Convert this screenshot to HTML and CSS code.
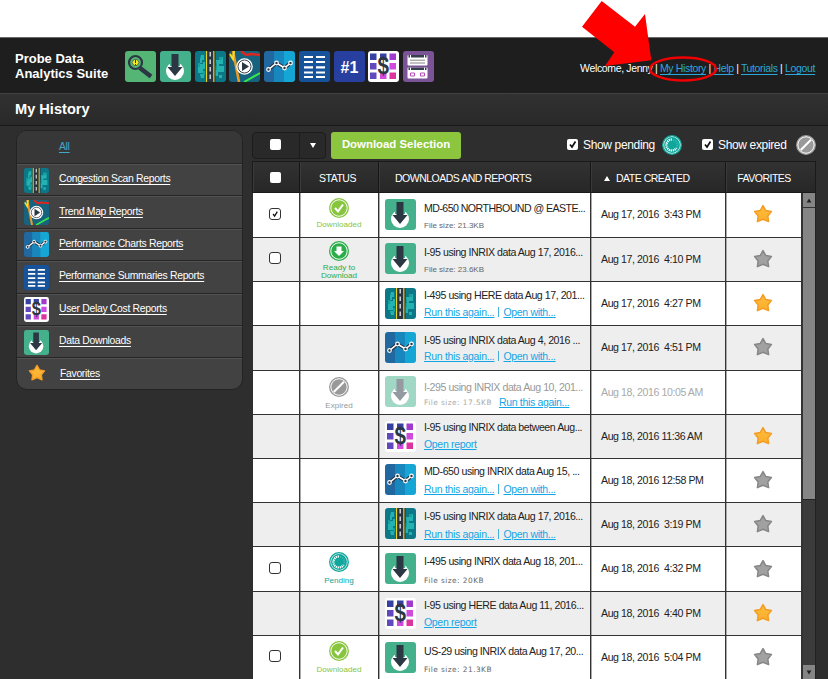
FILE: index.html
```html
<!DOCTYPE html>
<html lang="en">
<head>
<meta charset="utf-8">
<title>My History</title>
<link rel="stylesheet" href="styles.css">
</head>
<body>
<svg class="defs" aria-hidden="true">
  <defs>
    <linearGradient id="gold" x2="0" y2="1"><stop stop-color="#fdbd3d"/><stop offset="1" stop-color="#fbae2b"/></linearGradient>
    <clipPath id="tile"><rect width="31" height="31" rx="3"/></clipPath>
  </defs>
</svg>
<svg class="symbols" aria-hidden="true">
  <symbol id="search" viewBox="0 0 31 31">
    <rect width="31" height="31" rx="3" fill="#54b574"/>
    <path d="M15 17l11 8.500" stroke="#2c3744" stroke-width="4.500"/>
    <circle cx="10.500" cy="11.500" r="6.500" fill="#54b574" stroke="#2c3744" stroke-width="2.200"/>
    <path d="M7 11.500l2-3h3l2 3-2 3h-3z" fill="#f3ed24" stroke="#2c3744" stroke-width=".6"/>
    <path d="M10.500 9v3M10.500 13v1" stroke="#333" stroke-width="1"/>
  </symbol>
  <symbol id="download" viewBox="0 0 31 31">
    <rect width="31" height="31" rx="3" fill="#45b08c"/>
    <circle cx="15" cy="20" r="9" fill="#fff"/>
    <path d="M10 3h10v12h-10z" fill="#45b08c"/>
    <path d="M11.500 3h7v13h4L15 25 7.500 16h4z" fill="#2c3744"/>
  </symbol>
  <symbol id="scan" viewBox="0 0 31 31">
    <rect width="31" height="31" rx="3" fill="#0c7787"/>
    <path d="M6 4h3v5h-2v3h-2v-4zM4 13h4v-2h2v7H8v4H3v-6zM5 23h4v4H6zM21 9h3V6h4v7h-4v2h5v6h-6v4h-3v-7h2zM24 24h3v3h-3z" fill="#22b3b0"/>
    <path d="M3 12h2v4H3zM8 20h2v4H8zM19 15h3v4h-3zM24 6h3v3h-3z" fill="#159f9f"/>
    <path d="M10.500 0h10v31h-10z" fill="#283442"/>
    <path d="M11.500 0v31M18.800 0v31" stroke="#e9d51b" stroke-width="1.200"/>
    <path d="M15.200 1v30" stroke="#ddd" stroke-width="1.400" stroke-dasharray="4.500 3"/>
  </symbol>
  <symbol id="trend" viewBox="0 0 31 31"><g clip-path="url(#tile)">
    <rect width="31" height="31" fill="#17637f"/>
    <path d="M4 0l6 31" stroke="#ed9b24" stroke-width="2.500" fill="none"/>
    <path d="M1 3l3 5 1-8" stroke="#f3dc24" stroke-width="2" fill="none"/>
    <path d="M12 0l5 4 5-1 9 1M18 4l3-1" stroke="#db271d" stroke-width="2.500" fill="none"/>
    <path d="M15 31l16-9" stroke="#35e74b" stroke-width="2"/>
    <circle cx="15.500" cy="15.500" r="8.300" fill="#fff"/>
    <circle cx="15.500" cy="15.500" r="6.500" fill="#fff" stroke="#39444a" stroke-width="1"/>
    <path d="M13 11l7 4.500-7 4.500z" fill="#2c3744"/></g>
  </symbol>
  <symbol id="chart" viewBox="0 0 31 31"><g clip-path="url(#tile)">
    <path d="M0 0h10v31H0z" fill="#2268a0"/><path d="M10 0h10v31H10z" fill="#1887bd"/><path d="M20 0h11v31H20z" fill="#16a6d6"/>
    <path d="M4.500 18.500l8-6.500 8 5 6-5" stroke="#26384a" stroke-width="3.800" fill="none"/>
    <path d="M4.500 18.500l8-6.500 8 5 6-5" stroke="#fff" stroke-width="1.600" fill="none"/>
    <g fill="#26384a" stroke="#fff" stroke-width="1.200"><circle cx="4.500" cy="18.500" r="1.800"/><circle cx="12.500" cy="12" r="1.800"/><circle cx="20.500" cy="17" r="1.800"/><circle cx="26.500" cy="12" r="1.800"/></g></g>
  </symbol>
  <symbol id="summary" viewBox="0 0 31 31">
    <rect width="31" height="31" rx="3" fill="#16539b"/>
    <path d="M5 6h9M5 11h9M5 16.300h9M5 21.500h9M5 26h9M17 6h9M17 11h9M17 16.300h9M17 21.500h9M17 26h9" stroke="#fff" stroke-width="2.200"/>
  </symbol>
  <symbol id="rank" viewBox="0 0 31 31">
    <rect width="31" height="31" rx="3" fill="#27409f"/>
    <text x="15.500" y="22" text-anchor="middle" class="rank-text">#1</text>
  </symbol>
  <symbol id="cost" viewBox="0 0 31 31">
    <rect width="31" height="31" rx="3" fill="#fff"/>
    <path d="M2 2.500h6.500V9H2zM12 2.500h6.500V9H12z" fill="#3542a2"/>
    <path d="M2 12h6.500v6.500H2zM2 21.500h6.500V28H2z" fill="#6248bd"/>
    <path d="M21.500 2.500H28V9h-6.500z" fill="#a03bce"/><path d="M21.500 12H28v6.500h-6.500zM12 21.500h6.500V28H12z" fill="#d04add"/>
    <path d="M21.500 21.500H28V28h-6.500z" fill="#dc349f"/>
    <text transform="translate(15.200 22.500) scale(.9 1)" text-anchor="middle" class="dollar-text">$</text>
  </symbol>
  <symbol id="form" viewBox="0 0 31 31">
    <rect width="31" height="31" rx="3" fill="#7b5397"/>
    <rect x="4.500" y="4" width="20" height="10.500" rx="1" fill="#fff"/><rect x="4.500" y="16.500" width="20" height="11" rx="1" fill="#fff"/>
    <path d="M5.500 5.200h1.500M8 5.200h13M22 5.200h1.500M5.500 17.700h1.500M8 17.700h13M22 17.700h1.500" stroke="#36404c" stroke-width="2.400"/>
    <path d="M7 9.200h15M7 12h15" stroke="#777" stroke-width=".9"/>
    <path d="M7.500 22h4v3h-4zM17.500 22h4v3h-4z" fill="none" stroke="#b94bbc"/>
  </symbol>
  <symbol id="star" viewBox="0 0 20 20"><path d="M10 1.600l2.800 5 5.600 1-3.600 4.300.8 5.700-5.600-2.400-5.600 2.400.8-5.700-3.600-4.300 5.600-1z" stroke-width="1.500" stroke-linejoin="round"/></symbol>
  <symbol id="done" viewBox="0 0 20 20"><circle cx="10" cy="10" r="9.300" fill="#fff" stroke="#88c53e" stroke-width="1.300"/><circle cx="10" cy="10" r="7.700" fill="#88c53e"/><path d="M6 10l3 3.300 5-6.800" fill="none" stroke="#fff" stroke-width="2"/></symbol>
  <symbol id="ready" viewBox="0 0 20 20"><circle cx="10" cy="10" r="9.300" fill="#fff" stroke="#2bad4a" stroke-width="1.300"/><circle cx="10" cy="10" r="7.700" fill="#2bad4a"/><path d="M7.500 5.500h5v4.500h2.500l-5 5-5-5h2.500z" fill="#fff"/></symbol>
  <symbol id="pending" viewBox="0 0 20 20"><circle cx="10" cy="10" r="9.300" fill="#d9f1ee" stroke="#0fa69b" stroke-width="1.300"/><circle cx="10" cy="10" r="7.900" fill="#0fa69b"/><path d="M10 4.500A5.500 5.500 0 1 0 14.500 13" fill="none" stroke="#fff" stroke-width="2.200" stroke-dasharray="1.300 .7"/><path d="M14.500 13A5.500 5.500 0 0 0 10 4.500" fill="none" stroke="#4fc0b6" stroke-width="1.500" stroke-dasharray="1 1.300"/></symbol>
  <symbol id="expired" viewBox="0 0 20 20"><circle cx="10" cy="10" r="9.300" fill="#fff" stroke="#999" stroke-width="1.300"/><circle cx="10" cy="10" r="7.700" fill="#999"/><path d="M4.800 15L15 4.800" stroke="#fff" stroke-width="2"/></symbol>
</svg>

<header class="topbar">
  <div class="brand"><div>Probe Data</div><div>Analytics Suite</div></div>
  <div class="tools">
    <svg><use href="#search"/></svg><svg><use href="#download"/></svg><svg><use href="#scan"/></svg><svg><use href="#trend"/></svg><svg><use href="#chart"/></svg><svg><use href="#summary"/></svg><svg><use href="#rank"/></svg><svg><use href="#cost"/></svg><svg><use href="#form"/></svg>
  </div>
  <nav class="user">Welcome, Jenny | <a>My History</a> | <a>Help</a> | <a>Tutorials</a> | <a>Logout</a></nav>
</header>
<h1 class="page-title">My History</h1>

<div class="layout">
  <aside class="side">
    <div class="item all"><a>All</a></div>
    <div class="item"><svg><use href="#scan"/></svg><a>Congestion Scan Reports</a></div>
    <div class="item"><svg><use href="#trend"/></svg><a>Trend Map Reports</a></div>
    <div class="item"><svg><use href="#chart"/></svg><a>Performance Charts Reports</a></div>
    <div class="item"><svg><use href="#summary"/></svg><a>Performance Summaries Reports</a></div>
    <div class="item"><svg><use href="#cost"/></svg><a>User Delay Cost Reports</a></div>
    <div class="item"><svg><use href="#download"/></svg><a>Data Downloads</a></div>
    <div class="item"><svg class="gold small"><use href="#star"/></svg><a>Favorites</a></div>
  </aside>

  <main class="main">
    <div class="toolbar">
      <div class="select"><span class="half"><i class="blank"></i></span><span class="caret"><i class="down"></i></span></div>
      <div class="button">Download Selection</div>
      <div class="filter pend"><svg class="tick" viewBox="0 0 11 11"><path d="M3 5.500l2 2.500 3.500-5.500"/></svg><span>Show pending</span><svg class="state"><use href="#pending"/></svg></div>
      <div class="filter exp"><svg class="tick" viewBox="0 0 11 11"><path d="M3 5.500l2 2.500 3.500-5.500"/></svg><span>Show expired</span><svg class="state"><use href="#expired"/></svg></div>
    </div>
    <div class="head">
      <div class="center first"><i class="blank"></i></div><div class="center"><span>STATUS</span></div><div class="reports-head">DOWNLOADS AND REPORTS</div><div class="date-head"><i class="up"></i>DATE CREATED</div><div class="center fav-head">FAVORITES</div>
    </div>
    <div class="body">
      <div class="rows">
        <div class="row r1"><div class="check"><svg class="box" viewBox="0 0 13 13"><path d="M4 6.500l2 2.700 3.500-5.700"/></svg></div><div class="status done"><svg><use href="#done"/></svg><span>Downloaded</span></div><div class="report"><svg><use href="#download"/></svg><div><p>MD-650 NORTHBOUND @ EASTE...</p><p class="sub"><small>File size: 21.3KB</small></p></div></div><div class="date">Aug 17, 2016&nbsp; 3:43 PM</div><div class="fav"><svg class="gold"><use href="#star"/></svg></div></div>
        <div class="row r2"><div class="check"><svg class="box" viewBox="0 0 13 13"></svg></div><div class="status ready"><svg><use href="#ready"/></svg><span>Ready to<br>Download</span></div><div class="report"><svg><use href="#download"/></svg><div><p>I-95 using INRIX data Aug 17, 2016...</p><p class="sub"><small>File size: 23.6KB</small></p></div></div><div class="date">Aug 17, 2016&nbsp; 4:10 PM</div><div class="fav"><svg class="gray"><use href="#star"/></svg></div></div>
        <div class="row r3"><div class="check"></div><div class="status"></div><div class="report"><svg><use href="#scan"/></svg><div><p>I-495 using HERE data Aug 17, 201...</p><p class="sub"><a>Run this again...</a><b></b><a>Open with...</a></p></div></div><div class="date">Aug 17, 2016&nbsp; 4:27 PM</div><div class="fav"><svg class="gold"><use href="#star"/></svg></div></div>
        <div class="row r4"><div class="check"></div><div class="status"></div><div class="report"><svg><use href="#chart"/></svg><div><p>I-95 using INRIX data Aug 4, 2016 ...</p><p class="sub"><a>Run this again...</a><b></b><a>Open with...</a></p></div></div><div class="date">Aug 17, 2016&nbsp; 4:51 PM</div><div class="fav"><svg class="gray"><use href="#star"/></svg></div></div>
        <div class="row r5 old"><div class="check"></div><div class="status"><svg><use href="#expired"/></svg><span>Expired</span></div><div class="report"><svg><use href="#download"/></svg><div><p>I-295 using INRIX data Aug 10, 201...</p><p class="sub"><small class="wide">File size: 17.5KB</small><a>Run this again...</a></p></div></div><div class="date">Aug 18, 2016 10:05 AM</div><div class="fav"></div></div>
        <div class="row r6"><div class="check"></div><div class="status"></div><div class="report"><svg><use href="#cost"/></svg><div><p>I-95 using INRIX data between Aug...</p><p class="sub"><a>Open report</a></p></div></div><div class="date">Aug 18, 2016 11:36 AM</div><div class="fav"><svg class="gold"><use href="#star"/></svg></div></div>
        <div class="row r7"><div class="check"></div><div class="status"></div><div class="report"><svg><use href="#chart"/></svg><div><p>MD-650 using INRIX data Aug 15, ...</p><p class="sub"><a>Run this again...</a><b></b><a>Open with...</a></p></div></div><div class="date">Aug 18, 2016 12:58 PM</div><div class="fav"><svg class="gray"><use href="#star"/></svg></div></div>
        <div class="row r8"><div class="check"></div><div class="status"></div><div class="report"><svg><use href="#scan"/></svg><div><p>I-95 using INRIX data Aug 17, 2016...</p><p class="sub"><a>Run this again...</a><b></b><a>Open with...</a></p></div></div><div class="date">Aug 18, 2016&nbsp; 3:19 PM</div><div class="fav"><svg class="gray"><use href="#star"/></svg></div></div>
        <div class="row r9"><div class="check"><svg class="box" viewBox="0 0 13 13"></svg></div><div class="status pending"><svg><use href="#pending"/></svg><span>Pending</span></div><div class="report"><svg><use href="#download"/></svg><div><p>I-495 using INRIX data Aug 18, 201...</p><p class="sub"><small class="wide">File size: 20KB</small></p></div></div><div class="date">Aug 18, 2016&nbsp; 4:32 PM</div><div class="fav"><svg class="gray"><use href="#star"/></svg></div></div>
        <div class="row r10"><div class="check"></div><div class="status"></div><div class="report"><svg><use href="#cost"/></svg><div><p>I-95 using HERE data Aug 11, 2016...</p><p class="sub"><a>Open report</a></p></div></div><div class="date">Aug 18, 2016&nbsp; 4:40 PM</div><div class="fav"><svg class="gold"><use href="#star"/></svg></div></div>
        <div class="row r11"><div class="check"><svg class="box" viewBox="0 0 13 13"></svg></div><div class="status done"><svg><use href="#done"/></svg><span>Downloaded</span></div><div class="report"><svg><use href="#download"/></svg><div><p>US-29 using INRIX data Aug 17, 20...</p><p class="sub"><small class="wide">File size: 21.3KB</small></p></div></div><div class="date">Aug 18, 2016&nbsp; 5:04 PM</div><div class="fav"><svg class="gray"><use href="#star"/></svg></div></div>
      </div>
      <div class="scroll"><span><i class="up"></i></span><div class="thumb"></div><span class="end"><i class="down"></i></span></div>
    </div>
  </main>
</div>
<svg class="callout" viewBox="0 0 150 90">
  <path d="M21.700 1L55 26.700 65 14l6.300 46.300L25 66l9.300-13.700L2 26.700z" fill="#fe0000"/>
  <ellipse cx="103" cy="69" rx="33" ry="11.500" fill="none" stroke="#f00000" stroke-width="2.600"/>
</svg>
</body>
</html>
```
FILE: styles.css
```css
* { box-sizing: border-box; }
html, body { height: 679px; overflow: hidden; }
body { margin: 0; padding-top: 37px; position: relative; background: linear-gradient(#fff 37px, #2e2e2e 37px); font-family: "Liberation Sans", Arial, sans-serif; color: #fff; }
svg { display: block; flex: none; }
p { margin: 0; }
a { text-decoration: underline; }
.defs { position: absolute; width: 0; height: 0; }
.symbols { display: none; }
.rank-text { font: bold 16px "Liberation Sans", sans-serif; fill: #fff; }
.dollar-text { font: bold 23px "Liberation Sans", sans-serif; fill: #2c3744; }

.topbar { height: 56px; display: flex; align-items: flex-start; background: #1e1e1e; border-top: 1px solid #6a6a6a; padding: 13px 13px 0 15px; }
.brand { width: 110px; font-weight: bold; font-size: 13px; line-height: 15px; white-space: nowrap; }
.tools { display: flex; gap: 3.75px; }
.tools svg { width: 31px; height: 31px; }
.user { margin-left: auto; padding-top: 9px; font-size: 10.5px; letter-spacing: -.36px; line-height: 16px; white-space: nowrap; }
.user a { color: #2ba7dc; text-underline-offset: 2px; }
.page-title { margin: 0; height: 33px; padding: 0 15px; font-size: 14.6px; line-height: 31px; background: linear-gradient(#313131, #292929); border-top: 1px solid #404040; border-bottom: 1px solid #191919; }

.layout { display: flex; align-items: flex-start; padding: 4px 12px 0 16px; }
.side { width: 227px; margin-right: 9px; background: #424242; border: 1px solid #232323; border-radius: 11px; overflow: hidden; }
.item { height: 32.4px; display: flex; align-items: center; padding: 0 0 3px 7px; border-top: 1px solid #525252; border-bottom: 1px solid #262626; font-size: 10.4px; letter-spacing: -.31px; }
.item svg { width: 25px; height: 25px; margin: 3px 10px 0 0; }
.item a { text-underline-offset: 2px; white-space: nowrap; }
.item.all { height: 33px; padding: 0 0 2px 42px; background: #373737; border-top-color: #373737; color: #3fa8cb; }
.item .small { width: 18px; height: 18px; margin: 0 14px 0 4px; }
.item:last-child { height: 31px; border-bottom: 0; padding-bottom: 2px; }

.main { width: 564px; }
.toolbar { height: 31px; display: flex; align-items: center; }
.select { display: flex; width: 74px; height: 27px; border: 1px solid #1c1c1c; border-radius: 4px; background: #292929; }
.select span { display: flex; align-items: center; justify-content: center; }
.select .half { width: 47px; padding: 0 1px 2px 0; border-right: 1px solid #1c1c1c; }
.select .caret { flex: 1; }
.blank { width: 11px; height: 11px; border-radius: 2px; background: #fff; }
.down, .up { width: 0; height: 0; border: 3px solid transparent; }
.down { border-top: 5px solid #fff; border-bottom: 0; }
.up { border-bottom: 5px solid #fff; border-top: 0; }
.button { width: 130px; height: 27px; margin-left: 5px; border-radius: 3px; background: #8cc63e; text-align: center; font-weight: bold; font-size: 11.4px; line-height: 25px; }
.filter { display: flex; align-items: center; padding-bottom: 2px; font-size: 12px; letter-spacing: -.35px; white-space: nowrap; }
.filter.pend { margin-left: 106px; width: 135px; }
.filter span { width: 79px; margin-left: 5px; }
.filter .state { width: 20px; height: 20px; }
.filter.exp span { width: 78px; }
.tick { width: 11px; height: 11px; background: #fff; border-radius: 2px; }
.tick path, .box path { fill: none; stroke: #111; stroke-width: 1.7; }

.head, .row { display: grid; grid-template-columns: 47px 79px 212px 135px 1fr; }
.head { height: 32px; border: 1px solid #1a1a1a; background: linear-gradient(#323232, #272727); font-size: 10.5px; letter-spacing: -.5px; }
.head > div { display: flex; align-items: center; padding-top: 2px; border-right: 1px solid #161616; box-shadow: inset 1px 0 #3a3a3a; white-space: nowrap; }
.head .center { justify-content: center; padding-right: 3px; }
.head .center.first { padding: 0 1px 0 0; }
.head > div:last-child { border-right: 0; padding-right: 13px; }
.reports-head { padding-left: 16px; }
.date-head { padding-left: 13px; gap: 6px; }
.body { display: flex; height: 486px; padding-left: 1px; }
.rows { width: 550px; }
.row { height: 44px; border-bottom: 1px solid #333; background: #fff; color: #222; --i: 5px; --t: 7px; --s: 3px; --c: 5px; --l: 2px; }
.row:nth-child(even) { background: #eee; }
.row > div { min-width: 0; border-right: 1px solid #333; box-shadow: inset 1px 0 #aaa; }
.row > div:first-child { box-shadow: none; }
.check, .fav { display: flex; justify-content: center; align-items: center; }
.check { padding-right: 2px; }
.box { width: 12px; height: 12px; border: 1.4px solid #333; border-radius: 3px; background: #fff; margin-top: -3px; }
.row .status { display: flex; flex-direction: column; align-items: center; padding-top: var(--c); }
.status svg { width: 20px; height: 20px; }
.status span { margin-top: var(--l); font-size: 8.1px; line-height: 8px; text-align: center; }
.done { color: #88c53e; }
.ready { color: #2bad4a; }
.pending { color: #0fa69b; }
.row .report { display: flex; padding-left: 6px; }
.report > svg { width: 31px; height: 31px; margin-top: var(--i); }
.report > div { margin-left: 8px; padding-top: var(--t); }
.report p { height: 14px; font-size: 10.6px; line-height: 14px; letter-spacing: -.45px; white-space: nowrap; }
.r1 .report p:first-child { letter-spacing: -.55px; }
.report .sub { display: flex; align-items: center; margin-top: var(--s); font-size: 10.5px; letter-spacing: -.32px; }
.sub a { color: #13a5e5; }
.sub b { width: 1px; height: 10px; background: #45aeda; margin: 0 4px; }
.sub small { font-size: 8px; letter-spacing: 0; color: #666; }
.sub .wide { font: 7.4px/14px "DejaVu Sans", sans-serif; letter-spacing: .45px; margin: 2px 7px 0 0; }
.date { display: flex; align-items: center; padding: 0 0 2px 10px; font-size: 10.6px; letter-spacing: -.42px; white-space: nowrap; }
.fav svg { width: 20px; height: 20px; margin: -2px 2px 0 0; }
.gold { fill: url(#gold); stroke: #f39d25; }
.gray { fill: #a1a1a1; stroke: #868686; }
.old .status, .old p { color: #999; }
.old .date, .old small { color: #aaa; }
.old .report > svg { opacity: .5; }
.r1 { height: 45px; --i: 6px; --t: 8px; --s: 4px; --c: 5px; --l: 3px; }
.r2 { --c: 3px; --l: 3px; --s: 4px; }
.r3 { --i: 6px; --t: 6px; }
.r4 { height: 45px; --i: 6px; --s: 2px; }
.r5 { --t: 9px; --s: 1px; --c: 6px; --l: 5px; }
.r6 { --i: 6px; --t: 5px; --s: 3px; }
.r7 { --t: 5px; --s: 4px; }
.r8 { --t: 6px; --s: 4px; }
.r9 { height: 45px; --i: 6px; --s: 5px; --c: 5px; --l: 5px; }
.r10 { --i: 6px; --t: 6px; }
.r11 { --i: 6px; --t: 8px; --s: 4px; --c: 5px; --l: 5px; }
.r6 .fav svg, .r10 .fav svg { margin-top: -1px; }
.r9 .fav svg { margin-top: 0; }
.scroll { width: 14px; height: 486px; display: flex; flex-direction: column; background: #3b3b3b; border-left: 1px solid #333; border-right: 1px solid #222; }
.scroll span { height: 14px; display: flex; align-items: center; justify-content: center; background: #858585; }
.scroll i { transform: scale(.8); }
.scroll .up { border-bottom-color: #222; }
.scroll .down { border-top-color: #222; }
.thumb { height: 293px; background: #858585; border-top: 1px solid #333; border-bottom: 1px solid #222; }
.scroll .end { margin-top: auto; }
.callout { position: absolute; left: 580px; top: 0; width: 150px; height: 90px; }
```
